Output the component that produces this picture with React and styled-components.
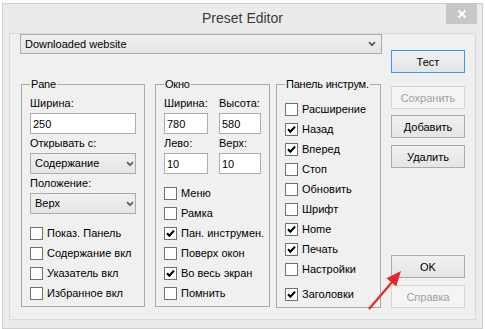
import React from 'react'
import styled, { createGlobalStyle } from 'styled-components'

const GlobalStyle = createGlobalStyle`
  html, body {
    margin: 0;
    padding: 0;
    background: #fff;
  }
  body {
    font-family: "Liberation Sans", Arial, sans-serif;
    font-size: 11px;
    color: #000;
  }
`

const paneChecks = [
  { label: 'Показ. Панель', on: false },
  { label: 'Содержание вкл', on: false },
  { label: 'Указатель вкл', on: false },
  { label: 'Избранное вкл', on: false },
]

const windowChecks = [
  { label: 'Меню', on: false },
  { label: 'Рамка', on: false },
  { label: 'Пан. инструмен.', on: true },
  { label: 'Поверх окон', on: false },
  { label: 'Во весь экран', on: true },
  { label: 'Помнить', on: false },
]

const toolbarChecks = [
  { label: 'Расширение', on: false },
  { label: 'Назад', on: true },
  { label: 'Вперед', on: true },
  { label: 'Стоп', on: false },
  { label: 'Обновить', on: false },
  { label: 'Шрифт', on: false },
  { label: 'Home', on: true },
  { label: 'Печать', on: true },
  { label: 'Настройки', on: false },
  { label: 'Заголовки', on: true, extra: true },
]

function Chevron() {
  return (
    <svg width="8" height="6" viewBox="0 0 8 6">
      <polyline points="1,1.2 4,4.2 7,1.2" fill="none" stroke="#5c5c5c" strokeWidth="1.7" />
    </svg>
  )
}

function Check({ label, on, extra }) {
  return (
    <CheckRow $extra={extra}>
      <Box>
        {on && (
          <svg width="11" height="11" viewBox="0 0 11 11">
            <polyline points="2,5.2 4.4,7.8 9,2.6" fill="none" stroke="#000" strokeWidth="2.1" />
          </svg>
        )}
      </Box>
      <span>{label}</span>
    </CheckRow>
  )
}

function Combo({ children, $pr }) {
  return (
    <ComboBox $pr={$pr}>
      <span>{children}</span>
      <Chevron />
    </ComboBox>
  )
}

export default function App() {
  return (
    <Stage>
      <GlobalStyle />
      <Window>
        <TitleBar>
          <Title>Preset Editor</Title>
          <CloseButton>
            <svg width="10" height="10" viewBox="0 0 10 10">
              <path d="M1.5 1.5 L8.5 8.5 M8.5 1.5 L1.5 8.5" stroke="#fff" strokeWidth="1.8" />
            </svg>
          </CloseButton>
        </TitleBar>
        <Client>
          <LeftCol>
            <Combo $pr={5}>Downloaded website</Combo>
            <Groups>
              <Group $w={124} $pt={6}>
                <Legend>Pane</Legend>
                <Stack>
                  <Label>Ширина:</Label>
                  <TextBox>250</TextBox>
                  <Label>Открывать с:</Label>
                  <Combo $pr={1}>Содержание</Combo>
                  <Label>Положение:</Label>
                  <Combo $pr={1}>Верх</Combo>
                </Stack>
                <CheckList $mt={9}>
                  {paneChecks.map((c) => <Check key={c.label} {...c} />)}
                </CheckList>
              </Group>
              <Group $w={115} $pt={6} $ml={10}>
                <Legend>Окно</Legend>
                <Grid>
                  <Label>Ширина:</Label>
                  <Label>Высота:</Label>
                  <TextBox>780</TextBox>
                  <TextBox>580</TextBox>
                  <Label>Лево:</Label>
                  <Label>Верх:</Label>
                  <TextBox>10</TextBox>
                  <TextBox>10</TextBox>
                </Grid>
                <CheckList $mt={9}>
                  {windowChecks.map((c) => <Check key={c.label} {...c} />)}
                </CheckList>
              </Group>
              <Group $w={105} $pt={8} $ml={6}>
                <Legend>Панель инструм.</Legend>
                <CheckList>
                  {toolbarChecks.map((c) => <Check key={c.label} {...c} />)}
                </CheckList>
              </Group>
            </Groups>
          </LeftCol>
          <RightCol>
            <Button $default>Тест</Button>
            <Button $mt={13} disabled>Сохранить</Button>
            <Button $mt={6}>Добавить</Button>
            <Button $mt={7}>Удалить</Button>
            <Spacer />
            <Button>OK</Button>
            <Button $mt={7} disabled>Справка</Button>
          </RightCol>
        </Client>
      </Window>
      <Arrow width="485" height="329" viewBox="0 0 485 329">
        <line x1="369" y1="309" x2="393" y2="281" stroke="#e8262d" strokeWidth="2.2" />
        <polygon points="401,271 386.5,278.3 396.2,286.6" fill="#e8262d" />
      </Arrow>
    </Stage>
  )
}

const Stage = styled.div`
  position: relative;
  width: 485px;
  height: 329px;
  padding: 3px 0 0 2px;
  box-sizing: border-box;
`

const Window = styled.div`
  width: 481px;
  height: 326px;
  box-sizing: border-box;
  border: 1px solid #cfcfcf;
  background: #ebebeb;
  display: flex;
  flex-direction: column;
`

const TitleBar = styled.div`
  height: 29px;
  display: grid;
  grid-template-columns: 1fr auto 1fr;
  align-items: start;
`

const Title = styled.div`
  grid-column: 2;
  font-size: 14px;
  line-height: 29px;
  color: #3a3a3a;
`

const CloseButton = styled.div`
  grid-column: 3;
  justify-self: end;
  width: 31px;
  height: 21px;
  margin-top: -1px;
  margin-right: 5px;
  background: #c7c7c7;
  display: flex;
  align-items: center;
  justify-content: center;
`

const Client = styled.div`
  height: 287px;
  margin: 0 6px 8px 6px;
  box-sizing: border-box;
  border: 1px solid #dadada;
  background: #f0f0f0;
  padding: 0 10px 11px 10px;
  display: flex;
  gap: 9px;
`

const LeftCol = styled.div`
  width: 362px;
  display: flex;
  flex-direction: column;
`

const RightCol = styled.div`
  width: 74px;
  padding-top: 16px;
  display: flex;
  flex-direction: column;
`

const Spacer = styled.div`
  flex: 1;
`

const ComboBox = styled.div`
  height: 21px;
  box-sizing: border-box;
  border: 1px solid #acacac;
  background: linear-gradient(#f0f0f0, #e5e5e5);
  padding: 0 ${(p) => p.$pr}px 0 4px;
  display: flex;
  align-items: center;
  justify-content: space-between;
  line-height: 13px;
`

const TextBox = styled.div`
  height: 21px;
  box-sizing: border-box;
  border: 1px solid #abadb3;
  background: #fff;
  padding: 0 2px;
  display: flex;
  align-items: center;
`

const Groups = styled.div`
  display: flex;
  align-items: flex-start;
  margin: 24px 0 0 1px;
`

const Group = styled.fieldset`
  width: ${(p) => p.$w}px;
  margin: 0 0 0 ${(p) => p.$ml || 0}px;
  padding: ${(p) => p.$pt}px 8px 3px 8px;
  box-sizing: border-box;
  border: 1px solid #a9a9a9;
  min-width: 0;
`

const Legend = styled.legend`
  padding: 0 1px;
  line-height: 13px;
  white-space: nowrap;
  letter-spacing: -0.2px;
`

const Stack = styled.div`
  display: flex;
  flex-direction: column;
  gap: 3px;
`

const Grid = styled.div`
  display: grid;
  grid-template-columns: 44px 42px;
  column-gap: 11px;
  row-gap: 3px;
`

const Label = styled.div`
  line-height: 13px;
  white-space: nowrap;
`

const CheckList = styled.div`
  margin-top: ${(p) => p.$mt || 0}px;
  display: flex;
  flex-direction: column;
`

const CheckRow = styled.div`
  height: 20px;
  margin-top: ${(p) => (p.$extra ? 5 : 0)}px;
  display: flex;
  align-items: center;
  gap: 4px;
  white-space: nowrap;
`

const Box = styled.div`
  width: 13px;
  height: 13px;
  box-sizing: border-box;
  border: 1px solid #707070;
  background: #fff;
  display: flex;
  align-items: center;
  justify-content: center;
  flex-shrink: 0;
`

const Button = styled.button`
  height: 23px;
  margin: ${(p) => p.$mt || 0}px 0 0 0;
  padding: 0;
  box-sizing: border-box;
  font-family: "Liberation Sans", Arial, sans-serif;
  font-size: 11px;
  color: #000;
  border: 1px solid ${(p) => (p.$default ? '#3399ff' : '#acacac')};
  background: linear-gradient(#f0f0f0, #e5e5e5);

  &:disabled {
    color: #a0a0a0;
    border-color: #d5d5d5;
    background: #f4f4f4;
  }
`

const Arrow = styled.svg`
  position: absolute;
  left: 0;
  top: 0;
  pointer-events: none;
`
